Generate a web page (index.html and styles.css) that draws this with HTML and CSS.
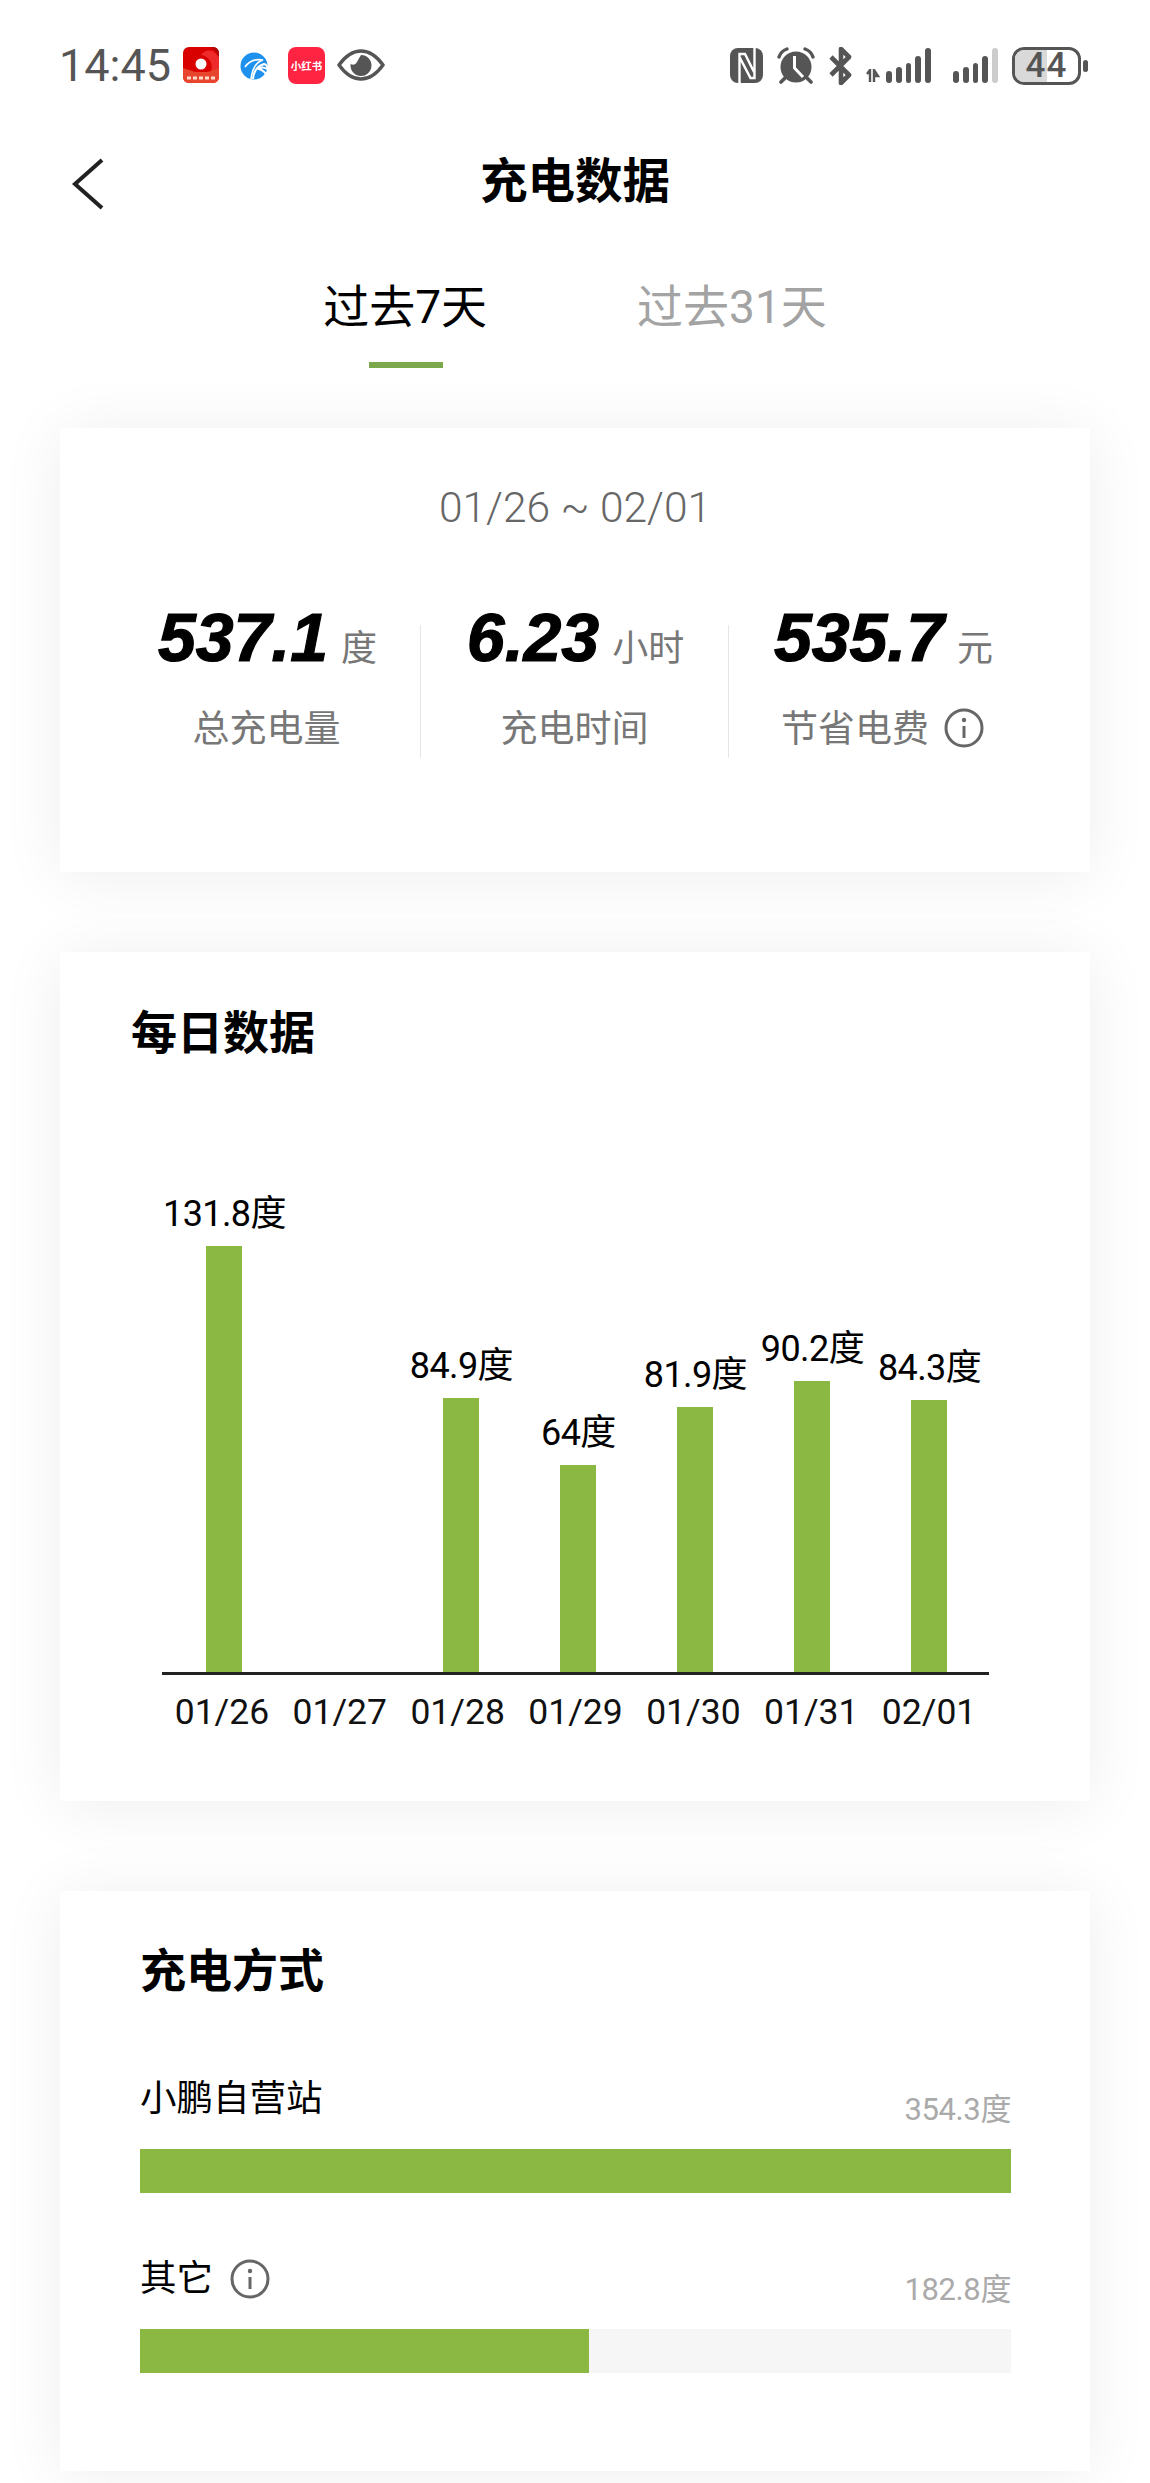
FILE: index.html
```html
<!DOCTYPE html>
<html lang="zh-CN">
<head>
<meta charset="utf-8">
<title>充电数据</title>
<link rel="stylesheet" href="styles.css">
</head>
<body>
<div class="page">
  <div class="status">
    <div class="status-left">
      <span class="time">14:45</span>
      <svg class="ic-app" viewBox="0 0 36 36"><defs><clipPath id="rc"><rect width="36" height="36" rx="6"/></clipPath></defs><g clip-path="url(#rc)"><rect width="36" height="36" fill="#d90000"/><path d="M8 0 A18 18 0 0 1 36 14 V0Z" fill="#a80808"/><path d="M18 8 A11 11 0 0 1 30 4 L36 10 V24 H28 A12 12 0 0 0 18 8Z" fill="#ee2a2a"/><path d="M0 21 Q10 24 12 25 H24 Q28 24 36 21 V36 H0Z" fill="#e8452f"/><circle cx="18" cy="17" r="5.5" fill="#fff"/><path d="M4 31 H32" stroke="#ffd9c9" stroke-width="3" stroke-dasharray="4 2"/></g></svg>
      <svg class="ic-blue" viewBox="0 0 28 28"><circle cx="14" cy="14" r="13.5" fill="#1e90ee"/><path d="M5 15 Q11 6 23 8 Q13 11 11 27" fill="none" stroke="#fff" stroke-width="1.6"/><path d="M13 27 Q14 15 24 12 Q28 13 27 17 Q22 14 19 17 Q25 19 27 24" fill="none" stroke="#fff" stroke-width="2"/></svg>
      <svg class="ic-xhs" viewBox="0 0 37 37"><rect width="37" height="37" rx="8" fill="#ff2442"/><text x="18.5" y="23" class="xhs-text" text-anchor="middle">小红书</text></svg>
      <svg class="ic-eye" viewBox="0 0 48 32"><path d="M2 16 Q12 2 24 2 Q36 2 46 16 Q36 30 24 30 Q12 30 2 16Z" fill="none" stroke="#555" stroke-width="3.4"/><path d="M24 6 A10.5 10.5 0 1 1 13.6 15 Q18 17 20 13 Q22 9 24 6Z" fill="#555"/></svg>
    </div>
    <div class="status-right">
      <svg class="ic-nfc" viewBox="0 0 33 35"><rect width="33" height="35" rx="8" fill="#555"/><path d="M9.5 35 V6 H15 L24 24 M9.5 9 L20.5 30 H24.5 V0" fill="none" stroke="#fff" stroke-width="2.4"/></svg>
      <svg class="ic-alarm" viewBox="0 0 38 37"><circle cx="19" cy="20" r="15.5" fill="#555"/><path d="M17.5 9 V21 L26 30" fill="none" stroke="#fff" stroke-width="3"/><path d="M2 10 Q4 4 10 2 M36 10 Q34 4 28 2" fill="none" stroke="#555" stroke-width="3.4" stroke-linecap="round"/><path d="M8 31 L4 35 M30 31 L34 35" stroke="#555" stroke-width="3.6" stroke-linecap="round"/></svg>
      <svg class="ic-bt" viewBox="0 0 26 38"><path d="M3 10 L21 28 L13 36 V2 L21 10 L3 28" fill="none" stroke="#555" stroke-width="4.6" stroke-linejoin="round"/></svg>
      <div class="signal signal-a">
        <svg class="ic-arrows" viewBox="0 0 16 14"><path d="M1 5 L4 1 V13 M8 13 V1 L12 7 H8" fill="none" stroke="#555" stroke-width="2.4"/></svg>
        <i class="sb sb1"></i><i class="sb sb2"></i><i class="sb sb3"></i><i class="sb sb4"></i><i class="sb sb5"></i>
      </div>
      <div class="signal signal-b">
        <i class="sb sb1"></i><i class="sb sb2"></i><i class="sb sb3"></i><i class="sb sb4"></i><i class="sb sb5 sb-off"></i>
      </div>
      <div class="battery">
        <div class="batt-body"><div class="batt-fill"></div><span class="batt-num">44</span></div>
        <div class="batt-cap"></div>
      </div>
    </div>
  </div>

  <div class="nav">
    <svg class="back" viewBox="0 0 32 52"><path d="M30 2 L3 26 L30 50" fill="none" stroke="#222" stroke-width="4"/></svg>
    <h1 class="nav-title">充电数据</h1>
  </div>

  <div class="tabs">
    <div class="tab tab-on">过去7天</div>
    <div class="tab">过去31天</div>
  </div>

  <section class="card card-sum">
    <div class="range">01/26 ~ 02/01</div>
    <div class="stats">
      <div class="stat">
        <div class="val"><b>537.1</b><span>度</span></div>
        <div class="lab">总充电量</div>
      </div>
      <div class="stat">
        <div class="val"><b>6.23</b><span>小时</span></div>
        <div class="lab">充电时间</div>
      </div>
      <div class="stat">
        <div class="val"><b>535.7</b><span>元</span></div>
        <div class="lab">节省电费<svg class="info info-raised" viewBox="0 0 40 40"><circle cx="20" cy="20" r="18" fill="none" stroke="#666" stroke-width="3"/><circle cx="20" cy="12" r="2.2" fill="#666"/><path d="M20 18 V30" stroke="#666" stroke-width="3"/></svg></div>
      </div>
    </div>
  </section>

  <section class="card card-daily">
    <h2 class="card-title">每日数据</h2>
    <div class="plot">
      <div class="col"><span class="bar-label">131.8度</span><div class="bar" style="height:426px"></div></div>
      <div class="col"></div>
      <div class="col"><span class="bar-label">84.9度</span><div class="bar" style="height:274px"></div></div>
      <div class="col"><span class="bar-label">64度</span><div class="bar" style="height:207px"></div></div>
      <div class="col"><span class="bar-label">81.9度</span><div class="bar" style="height:265px"></div></div>
      <div class="col"><span class="bar-label">90.2度</span><div class="bar" style="height:291px"></div></div>
      <div class="col"><span class="bar-label">84.3度</span><div class="bar" style="height:272px"></div></div>
    </div>
    <div class="dates">
      <span>01/26</span><span>01/27</span><span>01/28</span><span>01/29</span><span>01/30</span><span>01/31</span><span>02/01</span>
    </div>
  </section>

  <section class="card card-mode">
    <h2 class="card-title">充电方式</h2>
    <div class="mode">
      <div class="mode-head"><span class="mode-name">小鹏自营站</span><span class="mode-val">354.3度</span></div>
      <div class="track"><div class="fill" style="width:100%"></div></div>
    </div>
    <div class="mode">
      <div class="mode-head"><span class="mode-name">其它<svg class="info" viewBox="0 0 40 40"><circle cx="20" cy="20" r="18" fill="none" stroke="#666" stroke-width="3"/><circle cx="20" cy="12" r="2.2" fill="#666"/><path d="M20 18 V30" stroke="#666" stroke-width="3"/></svg></span><span class="mode-val">182.8度</span></div>
      <div class="track"><div class="fill" style="width:51.6%"></div></div>
    </div>
  </section>
</div>
</body>
</html>
```
FILE: styles.css
```css
* { box-sizing: border-box; }
html, body { margin: 0; padding: 0; background: #fff; }
body { font-family: Roboto, "Noto Sans CJK SC", sans-serif; color: #000; overflow-x: hidden; }
.page { width: 1150px; height: 2483px; padding-top: 47px; overflow: hidden; }

/* status bar */
.status { height: 38px; padding: 0 62px 0 59px; display: flex; justify-content: space-between; align-items: flex-start; }
.status-left, .status-right { display: flex; align-items: flex-start; }
.time { font-size: 45px; line-height: 38px; font-weight: 400; color: #555; width: 124px; }
.ic-app { width: 36px; height: 36px; margin-right: 21px; }
.ic-blue { width: 28px; height: 28px; margin-top: 5px; margin-right: 20px; }
.ic-xhs { width: 37px; height: 37px; margin-right: 12px; }
.xhs-text { font-size: 10.5px; font-weight: 700; fill: #fff; }
.ic-eye { width: 48px; height: 32px; margin-top: 2px; }
.ic-nfc { width: 33px; height: 35px; margin-top: 1px; margin-right: 14px; }
.ic-alarm { width: 38px; height: 37px; margin-right: 13px; }
.ic-bt { width: 26px; height: 38px; margin-right: 12px; }
.signal { display: flex; align-items: flex-end; height: 36px; gap: 4px; }
.signal-a { margin-right: 22px; }
.signal-b { margin-right: 14px; }
.ic-arrows { width: 16px; height: 14px; margin-right: 0; }
.sb { display: block; width: 5.8px; background: #555; border-radius: 3px; }
.sb1 { height: 12px; } .sb2 { height: 16px; } .sb3 { height: 20px; } .sb4 { height: 27px; } .sb5 { height: 35px; }
.sb-off { background: #ccc; }
.battery { display: flex; align-items: center; height: 38px; gap: 2px; }
.batt-body { position: relative; width: 69px; height: 38px; border: 3px solid #555; border-radius: 12px; display: flex; align-items: center; justify-content: center; }
.batt-fill { position: absolute; left: 0; top: 0; bottom: 0; width: 32px; background: #d9d9d9; border-radius: 9px 0 0 9px; }
.batt-num { position: relative; font-size: 35px; line-height: 32px; font-weight: 500; color: #555; letter-spacing: 1px; }
.batt-cap { width: 5px; height: 12px; background: #555; border-radius: 3px; }

/* nav */
.nav { height: 94px; margin-top: 50px; position: relative; display: flex; align-items: center; justify-content: center; }
.back { position: absolute; left: 72px; top: 23px; width: 32px; height: 52px; }
.nav-title { margin: 0; font-size: 47.5px; line-height: 60px; font-weight: 700; }

/* tabs */
.tabs { display: flex; justify-content: center; gap: 150px; padding-top: 48px; }
.tab { font-size: 46px; line-height: 60px; color: #a3a3a3; height: 91px; position: relative; }
.tab-on { color: #000; }
.tab-on::after { content: ""; position: absolute; left: 50%; bottom: 0; width: 74px; height: 6px; margin-left: -36px; background: #7aa84a; }

/* cards */
.card { margin: 0 60px; background: #fff; box-shadow: 0 4px 60px rgba(0, 0, 0, .07); }
.card-title { margin: 0; font-size: 46px; line-height: 60px; font-weight: 700; }

.card-sum { margin-top: 60px; height: 444px; padding-top: 56px; }
.range { text-align: center; font-size: 42.5px; line-height: 48px; font-weight: 300; color: #666; }
.stats { margin-top: 72px; padding: 0 53.5px 0 52.5px; display: grid; grid-template-columns: repeat(3, 1fr); }
.stat { position: relative; display: flex; flex-direction: column; align-items: center; }
.stat:not(:last-child)::after { content: ""; position: absolute; right: 0; top: 21px; width: 1px; height: 133px; background: #e6e6e6; }
.val { display: flex; align-items: baseline; gap: 13px; padding-left: 2px; line-height: 66px; }
.val b { font-family: "Liberation Sans", sans-serif; font-size: 68px; font-style: italic; font-weight: 700; -webkit-text-stroke: 1.2px #000; }
.val span { font-size: 36px; color: #777; }
.lab { margin-top: 22px; display: flex; align-items: center; gap: 15px; font-size: 37px; line-height: 52px; color: #777; }
.info { width: 40px; height: 40px; display: block; }
.info-raised { margin-top: -5px; }

.card-daily { margin-top: 80px; height: 849px; padding-top: 51px; }
.card-daily .card-title { padding-left: 71px; }
.plot { margin-left: 102px; width: 827px; height: 612px; padding: 0 1px; border-bottom: 3px solid #222; display: grid; grid-template-columns: repeat(7, 1fr); align-items: end; }
.col { display: flex; flex-direction: column; align-items: center; }
.bar-label { font-size: 36px; line-height: 44px; margin-bottom: 10px; white-space: nowrap; letter-spacing: -.6px; }
.bar { width: 36px; background: #8bb842; }
.dates { margin-left: 102px; width: 827px; margin-top: 12px; padding: 0 1px; display: grid; grid-template-columns: repeat(7, 1fr); font-size: 35.5px; line-height: 50px; text-align: center; color: #111; }

.card-mode { margin-top: 90px; height: 580px; padding: 50px 79px 0 80px; }
.mode { margin-top: 59px; }
.card-title + .mode { margin-top: 71px; }
.mode-head { height: 58px; display: flex; justify-content: space-between; }
.mode-name { display: flex; align-items: center; gap: 17px; height: 52px; padding-top: 2px; font-size: 36.5px; line-height: 52px; }
.mode-val { align-self: flex-end; font-size: 31px; line-height: 40px; color: #aaa; letter-spacing: -.4px; }
.track { margin-top: 19px; height: 44px; background: #f6f6f6; }
.fill { height: 100%; background: #8bb842; }
```
